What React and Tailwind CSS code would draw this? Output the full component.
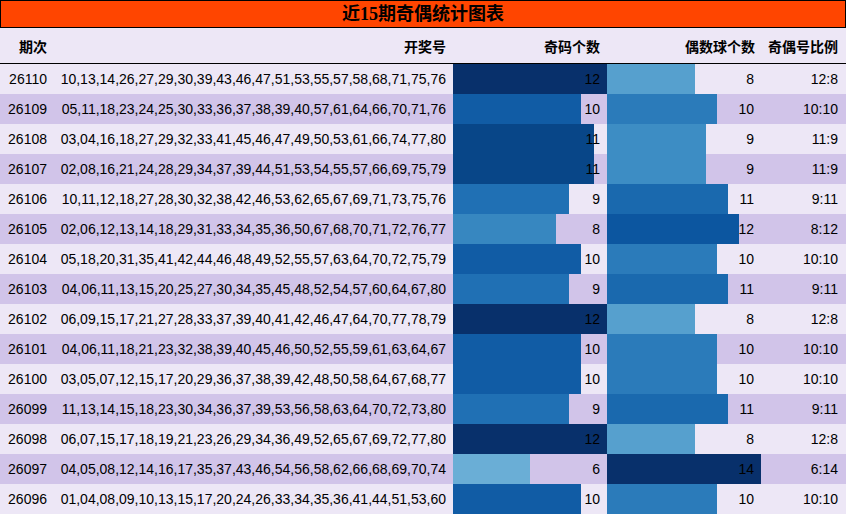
import React from "react";

const rows = [
  ["26110", "10,13,14,26,27,29,30,39,43,46,47,51,53,55,57,58,68,71,75,76", 12, 8],
  ["26109", "05,11,18,23,24,25,30,33,36,37,38,39,40,57,61,64,66,70,71,76", 10, 10],
  ["26108", "03,04,16,18,27,29,32,33,41,45,46,47,49,50,53,61,66,74,77,80", 11, 9],
  ["26107", "02,08,16,21,24,28,29,34,37,39,44,51,53,54,55,57,66,69,75,79", 11, 9],
  ["26106", "10,11,12,18,27,28,30,32,38,42,46,53,62,65,67,69,71,73,75,76", 9, 11],
  ["26105", "02,06,12,13,14,18,29,31,33,34,35,36,50,67,68,70,71,72,76,77", 8, 12],
  ["26104", "05,18,20,31,35,41,42,44,46,48,49,52,55,57,63,64,70,72,75,79", 10, 10],
  ["26103", "04,06,11,13,15,20,25,27,30,34,35,45,48,52,54,57,60,64,67,80", 9, 11],
  ["26102", "06,09,15,17,21,27,28,33,37,39,40,41,42,46,47,64,70,77,78,79", 12, 8],
  ["26101", "04,06,11,18,21,23,32,38,39,40,45,46,50,52,55,59,61,63,64,67", 10, 10],
  ["26100", "03,05,07,12,15,17,20,29,36,37,38,39,42,48,50,58,64,67,68,77", 10, 10],
  ["26099", "11,13,14,15,18,23,30,34,36,37,39,53,56,58,63,64,70,72,73,80", 9, 11],
  ["26098", "06,07,15,17,18,19,21,23,26,29,34,36,49,52,65,67,69,72,77,80", 12, 8],
  ["26097", "04,05,08,12,14,16,17,35,37,43,46,54,56,58,62,66,68,69,70,74", 6, 14],
  ["26096", "01,04,08,09,10,13,15,17,20,24,26,33,34,35,36,41,44,51,53,60", 10, 10],
];

const oddColor = {
  6: "bg-[#6aaed6]",
  8: "bg-[#3787c0]",
  9: "bg-[#2070b4]",
  10: "bg-[#115ca5]",
  11: "bg-[#084688]",
  12: "bg-[#08306b]",
};

const evenColor = {
  8: "bg-[#56a0ce]",
  9: "bg-[#3d8dc4]",
  10: "bg-[#2b7bba]",
  11: "bg-[#1a69ae]",
  12: "bg-[#0c56a0]",
  14: "bg-[#08306b]",
};

const font = { fontFamily: '"Liberation Sans", "Noto Sans CJK SC", sans-serif' };

function BarCell({ value, max, color }) {
  return (
    <div className="relative h-full flex items-center justify-end pr-[7px]">
      <div
        className={`absolute left-0 top-0 h-full ${color}`}
        style={{ width: `${(value / max) * 100}%` }}
      />
      <span className="relative">{value}</span>
    </div>
  );
}

export default function App() {
  return (
    <div className="w-[846px] h-[515px] overflow-hidden bg-white text-black" style={font}>
      <div
        className="h-[28px] bg-[#ff4500] border border-black flex items-center justify-center text-[18px] font-bold leading-none"
        style={{ fontFamily: '"Liberation Serif", "Noto Sans CJK SC", serif' }}
      >
        近15期奇偶统计图表
      </div>
      <div className="grid grid-cols-[54px_399px_154px_154px_85px] h-[36px] bg-[#ede7f6] border-b border-black text-[14px] font-bold pt-[3px]">
        <div className="flex items-center justify-end pr-[7px]">期次</div>
        <div className="flex items-center justify-end pr-[7px]">开奖号</div>
        <div className="flex items-center justify-end pr-[7px]">奇码个数</div>
        <div className="flex items-center justify-end pr-[6px]">偶数球个数</div>
        <div className="flex items-center justify-end pr-[8px]">奇偶号比例</div>
      </div>
      {rows.map(([period, nums, odd, even], i) => (
        <div
          key={period}
          className={`grid grid-cols-[54px_399px_154px_154px_85px] h-[30px] text-[14px] ${
            i % 2 === 0 ? "bg-[#ede7f6]" : "bg-[#d1c4e9]"
          }`}
        >
          <div className="flex items-center justify-end pr-[7px]">{period}</div>
          <div className="flex items-center justify-end pr-[7px] whitespace-nowrap">{nums}</div>
          <BarCell value={odd} max={12} color={oddColor[odd]} />
          <BarCell value={even} max={14} color={evenColor[even]} />
          <div className="flex items-center justify-end pr-[8px]">
            {odd}:{even}
          </div>
        </div>
      ))}
    </div>
  );
}
